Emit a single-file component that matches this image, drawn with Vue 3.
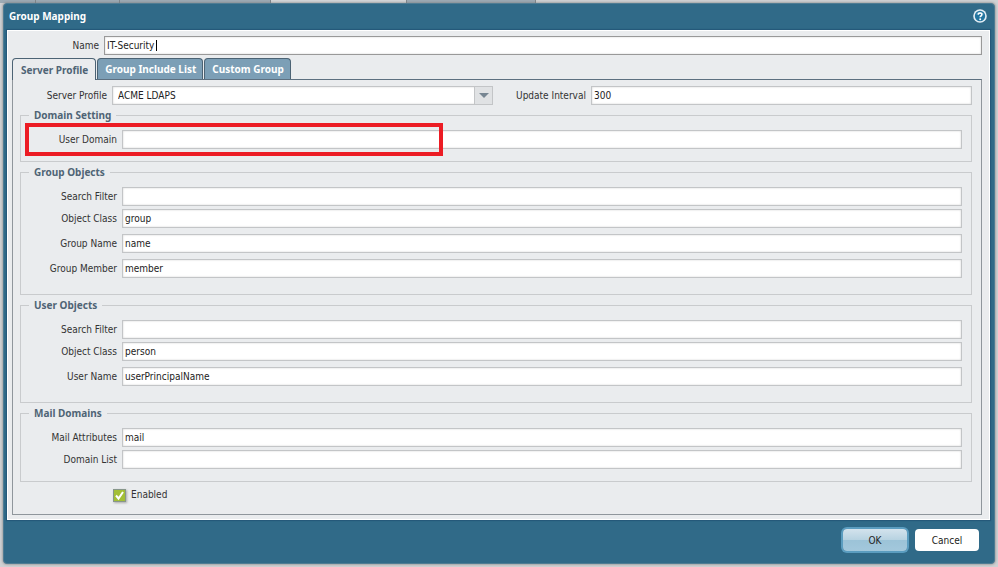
<template>
  <div class="page">
    <div class="backdrop">
      <span v-for="(tab, idx) in backTabs" :key="idx" class="back-tab" :class="{ active: tab.active }" :style="{ width: tab.width + 'px' }"></span>
    </div>

    <form class="dialog" @submit.prevent>
      <header class="dialog-header">
        <h1 class="title">Group Mapping</h1>
        <button type="button" class="help" aria-label="Help">
          <svg viewBox="0 0 14 14" width="14" height="14">
            <circle cx="7" cy="7" r="6.8" fill="#e4eef5" />
            <circle cx="7" cy="7" r="5.2" fill="#2375a0" />
            <path d="M3 5.5a4.4 4.4 0 0 1 8 0q-4-1.5-8 0z" fill="#6ea9c8" />
            <path d="M5.2 5.7C5.3 3.5 8.9 3.5 8.9 5.6C8.9 6.8 7.2 6.9 7.2 8.3" fill="none" stroke="#fff" stroke-width="1.6" />
            <circle cx="7.2" cy="10.2" r="1" fill="#fff" />
          </svg>
        </button>
      </header>

      <main class="dialog-body">
        <div class="row name-row">
          <label for="name">Name</label>
          <span class="name-field">
            <input id="name" v-model="name" type="text" class="field" />
            <span class="caret"></span>
          </span>
        </div>

        <div class="tabs" role="tablist">
          <button
            v-for="tab in tabs"
            :key="tab"
            type="button"
            role="tab"
            class="tab"
            :class="{ active: tab === activeTab }"
            :aria-selected="tab === activeTab"
            @click="activeTab = tab"
          >{{ tab }}</button>
        </div>

        <section class="panel">
          <div class="profile-row">
            <label for="profile">Server Profile</label>
            <span class="select-wrap">
              <select id="profile" v-model="profile" class="field">
                <option>ACME LDAPS</option>
              </select>
              <span class="select-arrow"></span>
            </span>
            <label for="interval" class="interval-label">Update Interval</label>
            <input id="interval" v-model="interval" type="text" class="field" />
          </div>

          <fieldset v-for="group in groups" :key="group.title" class="group" :class="{ roomy: group.roomy }">
            <legend>{{ group.title }}</legend>
            <div v-for="(item, idx) in group.fields" :key="item.id" class="row" :class="{ spaced: idx > 1 }">
              <label :for="item.id">{{ item.label }}</label>
              <input :id="item.id" v-model="item.value" type="text" class="field" />
            </div>
            <span v-if="group.marked" class="marker"></span>
          </fieldset>

          <label class="enabled">
            <input v-model="enabled" type="checkbox" class="check-input" />
            <svg class="check" viewBox="0 0 13 13" width="13" height="13">
              <rect x="0.5" y="0.5" width="12" height="12" fill="#a3bf36" stroke="#87968a" />
              <path v-if="enabled" d="M3 6.5l2.5 3L10 3" fill="none" stroke="#fff" stroke-width="2" />
            </svg>
            <span>Enabled</span>
          </label>
        </section>
      </main>

      <footer class="dialog-footer">
        <button type="submit" class="btn primary">OK</button>
        <button type="button" class="btn">Cancel</button>
      </footer>
    </form>
  </div>
</template>

<script setup>
import { ref } from 'vue'

const backTabs = [
  { width: 36 },
  { width: 84 },
  { width: 151 },
  { width: 136, active: true },
  { width: 129 },
]

const tabs = ['Server Profile', 'Group Include List', 'Custom Group']
const activeTab = ref('Server Profile')

const name = ref('IT-Security')
const profile = ref('ACME LDAPS')
const interval = ref('300')
const enabled = ref(true)

const groups = ref([
  {
    title: 'Domain Setting',
    marked: true,
    fields: [{ id: 'user-domain', label: 'User Domain', value: '' }],
  },
  {
    title: 'Group Objects',
    roomy: true,
    fields: [
      { id: 'group-filter', label: 'Search Filter', value: '' },
      { id: 'group-class', label: 'Object Class', value: 'group' },
      { id: 'group-name', label: 'Group Name', value: 'name' },
      { id: 'group-member', label: 'Group Member', value: 'member' },
    ],
  },
  {
    title: 'User Objects',
    roomy: true,
    fields: [
      { id: 'user-filter', label: 'Search Filter', value: '' },
      { id: 'user-class', label: 'Object Class', value: 'person' },
      { id: 'user-name', label: 'User Name', value: 'userPrincipalName' },
    ],
  },
  {
    title: 'Mail Domains',
    fields: [
      { id: 'mail-attributes', label: 'Mail Attributes', value: 'mail' },
      { id: 'domain-list', label: 'Domain List', value: '' },
    ],
  },
])
</script>

<style>
body {
  background: #d0d2d4;
}
</style>

<style scoped>
* {
  box-sizing: border-box;
}
.page {
  display: flex;
  flex-direction: column;
  min-height: 100vh;
  padding: 0 3px 3px;
  font-family: "DejaVu Sans Condensed", "Noto Sans", sans-serif;
  font-size: 10px;
  color: #333;
}
.page button,
.page input,
.page select {
  font: inherit;
  color: #222;
}
.backdrop {
  display: flex;
  height: 3px;
  margin: 0 -3px;
}
.back-tab {
  background: #9dabb5;
  border-right: 1px solid #7f868b;
}
.back-tab.active {
  background: #d5d7d9;
}
.dialog {
  display: flex;
  flex: 1;
  flex-direction: column;
  padding: 0 4px 0 3px;
  background: #306a88;
  border: 1px solid #4f7c93;
  border-radius: 4px;
  box-shadow: 0 0 3px #777;
}
.dialog-header {
  display: flex;
  align-items: center;
  justify-content: space-between;
  height: 26px;
  padding: 0 3px 2px 2px;
}
.title {
  margin: 0;
  font-family: "Noto Sans", sans-serif;
  font-size: 10px;
  font-weight: bold;
  color: #fff;
}
.help {
  display: flex;
  padding: 0;
  background: none;
  border: 0;
}
.dialog-body {
  display: flex;
  flex: 1;
  flex-direction: column;
  padding: 5px 7px 4px 4px;
  background: #eaecee;
  border: 1px solid #fff;
  box-shadow: 0 0 1px 1px #25597a;
}
.row {
  display: flex;
  align-items: center;
  gap: 5px;
}
.row > label {
  flex: none;
  width: 92px;
  line-height: 14px;
  text-align: right;
  white-space: nowrap;
}
.field {
  flex: 1;
  width: 100%;
  min-width: 0;
  height: 19px;
  margin: 0;
  padding: 0 2px;
  background: #fff;
  border: 1px solid #c3c5c7;
  border-radius: 0;
  outline: none;
  box-shadow: inset 0 0 2px #ccc;
}
.name-row > label {
  width: 87px;
}
.name-field {
  position: relative;
  display: flex;
  flex: 1;
}
.name-field .field {
  border-color: #999;
}
.caret {
  position: absolute;
  top: 4px;
  left: 52px;
  width: 1px;
  height: 11px;
  background: #000;
}
.tabs {
  display: flex;
  gap: 1px;
  margin-top: 3px;
}
.tab {
  height: 21px;
  padding: 0 6px 0 7px;
  background: #7c9fb6;
  border: 1px solid #4c6374;
  border-bottom: 0;
  border-radius: 4px 4px 0 0;
}
.page .tab {
  font-family: "Noto Sans", sans-serif;
  font-size: 10px;
  font-weight: bold;
  color: #fff;
}
.page .tab.active {
  height: 22px;
  margin-bottom: -1px;
  padding: 0 7px 0 8px;
  color: #4f6475;
  background: #eaecee;
  z-index: 1;
}
.panel {
  flex: 1;
  padding: 6px 9px 0 7px;
  border: 1px solid #8f969c;
  border-top-color: #5d7080;
}
.profile-row {
  display: grid;
  grid-template-columns: 87px minmax(0, 1fr) auto minmax(0, 1fr);
  gap: 5px;
  align-items: center;
  line-height: 14px;
}
.profile-row > label {
  text-align: right;
  white-space: nowrap;
}
.profile-row .interval-label {
  padding-left: 18px;
}
.select-wrap {
  position: relative;
  display: flex;
}
.select-wrap .field {
  appearance: none;
  padding: 0 5px;
}
.select-arrow {
  position: absolute;
  top: 0;
  right: 0;
  width: 19px;
  height: 19px;
  background: #e0e2e4;
  border: 1px solid #c3c5c7;
  pointer-events: none;
}
.select-arrow::after {
  position: absolute;
  top: 6px;
  left: 4px;
  border: 5px solid transparent;
  border-top-color: #778692;
  border-bottom: 0;
  content: "";
}
.group {
  position: relative;
  min-width: 0;
  margin: 4px 0 0;
  padding: 8px 9px 12px 4px;
  border: 1px solid #c9cbcd;
}
.group.roomy {
  padding-bottom: 16px;
}
.group .row + .row {
  margin-top: 3px;
}
.group .row.spaced {
  margin-top: 6px;
}
legend {
  height: 13px;
  margin-left: 4px;
  padding: 0 5px;
  font-family: "Noto Sans", sans-serif;
  font-size: 10px;
  font-weight: bold;
  line-height: 13px;
  color: #4f6475;
}
.marker {
  position: absolute;
  top: 1px;
  left: 4px;
  width: 418px;
  height: 33px;
  border: 4px solid #ec1c24;
  pointer-events: none;
}
.enabled {
  display: flex;
  align-items: center;
  gap: 5px;
  width: max-content;
  margin: 6px 0 0 93px;
  line-height: 14px;
}
.check-input {
  position: absolute;
  margin: 0;
  opacity: 0;
}
.check {
  filter: drop-shadow(1px 1px 1px #aaa);
}
.dialog-footer {
  display: flex;
  gap: 8px;
  align-items: center;
  justify-content: flex-end;
  height: 43px;
  padding: 0 11px 3px 0;
}
.btn {
  width: 64px;
  height: 22px;
  padding: 0;
  background: #fff;
  border: 0;
  border-radius: 4px;
}
.btn.primary {
  background: linear-gradient(#d3e3ed, #b7d2e1 50%, #9cc3d8 51%, #a3c8dc);
  box-shadow: 0 0 0 2px #5b9dc0;
}
</style>
